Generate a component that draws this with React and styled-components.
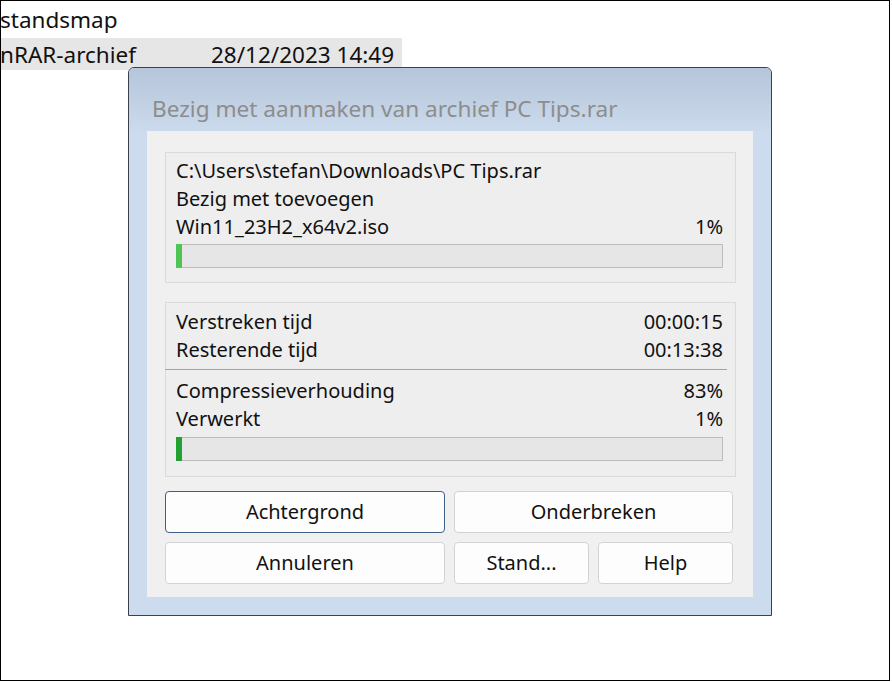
import React from "react";
import styled, { createGlobalStyle } from "styled-components";

const Global = createGlobalStyle`
  html, body { margin: 0; padding: 0; background: #fff; }
  body { font-family: "Noto Sans", "Open Sans", sans-serif; }
  * { box-sizing: border-box; }
`;

const Screen = styled.div`
  position: relative;
  width: 890px;
  height: 681px;
  border: 1px solid #000;
  background: #fff;
  overflow: hidden;
  font-family: "Noto Sans", sans-serif;
  color: #111;
`;

const FileList = styled.div`
  display: flex;
  flex-direction: column;
  gap: 2px;
  padding-top: 3px;
  margin-left: -1px;
`;

const FileRow = styled.div`
  display: flex;
  width: 402px;
  height: 32px;
  padding-top: ${(p) => p.$offset || 0}px;
  line-height: ${(p) => 32 - (p.$offset || 0)}px;
  font-size: 22.5px;
  background: ${(p) => (p.$selected ? "#e6e6e6" : "transparent")};
  white-space: nowrap;
`;

const NameCell = styled.div`
  width: 211px;
  overflow: hidden;
`;

const DateCell = styled.div`
  flex: 1;
`;

const Dialog = styled.div`
  position: absolute;
  left: 127px;
  top: 66px;
  width: 644px;
  height: 549px;
  border: 1px solid #3b4049;
  border-radius: 6px 6px 0 0;
  background: #cddbee;
  display: flex;
  flex-direction: column;
  overflow: hidden;
`;

const TitleBar = styled.div`
  height: 63px;
  flex: none;
  padding: 26px 0 0 23px;
  background: linear-gradient(to bottom, #b6c6da 0%, #c2d1e4 60%, #ccdaed 100%);
  font-size: 22.6px;
  line-height: 30px;
  color: #8d8d8d;
  white-space: nowrap;
`;

const Frame = styled.div`
  flex: 1;
  padding: 0 18px 18px 18px;
  display: flex;
`;

const Client = styled.div`
  flex: 1;
  background: #f0f0f0;
  padding: 21px 17px 12px 18px;
  display: flex;
  flex-direction: column;
`;

const Group = styled.div`
  border: 1px solid #dadada;
  background: #eeeeee;
  padding: ${(p) => p.$pad};
  display: flex;
  flex-direction: column;
  margin-bottom: ${(p) => p.$mb || 0}px;
`;

const Line = styled.div`
  display: flex;
  justify-content: space-between;
  font-size: 20px;
  line-height: 28px;
  color: #111;
  white-space: nowrap;
`;

const Separator = styled.div`
  height: 1px;
  background: #a3a3a3;
  margin: 5px -4px 7px -11px;
`;

const Bar = styled.div`
  height: 24px;
  margin-top: ${(p) => p.$mt}px;
  border: 1px solid #bdbdbd;
  background: #e6e6e6;
  display: flex;
`;

const Fill = styled.div`
  margin: -1px 0 0 -1px;
  height: calc(100% + 2px);
  background: ${(p) => p.$color};
`;

const Buttons = styled.div`
  display: grid;
  grid-template-columns: 280px 135px 135px;
  grid-auto-rows: 42px;
  gap: 9px;
  margin-top: 14px;
`;

const Button = styled.button`
  grid-column: ${(p) => p.$span || "auto"};
  font-family: "Noto Sans", sans-serif;
  font-size: 20px;
  color: #111;
  background: #fdfdfd;
  border: 1px solid ${(p) => (p.$focused ? "#3e5f86" : "#d3d3d3")};
  border-radius: 4px;
  padding: 0;
  line-height: 1;
`;

function Progress({ value, color, mt }) {
  return (
    <Bar $mt={mt}>
      <Fill $color={color} style={{ width: `calc(${value}% + 1px)` }} />
    </Bar>
  );
}

export default function App() {
  return (
    <>
      <Global />
      <Screen>
        <FileList>
          <FileRow>
            <NameCell>standsmap</NameCell>
          </FileRow>
          <FileRow $selected $offset={2}>
            <NameCell>nRAR-archief</NameCell>
            <DateCell>28/12/2023 14:49</DateCell>
          </FileRow>
        </FileList>
        <Dialog>
          <TitleBar>Bezig met aanmaken van archief PC Tips.rar</TitleBar>
          <Frame>
            <Client>
              <Group $pad="4px 12px 14px 10px" $mb={19}>
                <Line>C:\Users\stefan\Downloads\PC Tips.rar</Line>
                <Line>Bezig met toevoegen</Line>
                <Line>
                  <span>Win11_23H2_x64v2.iso</span>
                  <span>1%</span>
                </Line>
                <Progress value={1} color="#4cc552" mt={3} />
              </Group>
              <Group $pad="5px 12px 15px 10px">
                <Line>
                  <span>Verstreken tijd</span>
                  <span>00:00:15</span>
                </Line>
                <Line>
                  <span>Resterende tijd</span>
                  <span>00:13:38</span>
                </Line>
                <Separator />
                <Line>
                  <span>Compressieverhouding</span>
                  <span>83%</span>
                </Line>
                <Line>
                  <span>Verwerkt</span>
                  <span>1%</span>
                </Line>
                <Progress value={1} color="#23a032" mt={4} />
              </Group>
              <Buttons>
                <Button $focused>Achtergrond</Button>
                <Button $span="span 2">Onderbreken</Button>
                <Button>Annuleren</Button>
                <Button>Stand...</Button>
                <Button>Help</Button>
              </Buttons>
            </Client>
          </Frame>
        </Dialog>
      </Screen>
    </>
  );
}
